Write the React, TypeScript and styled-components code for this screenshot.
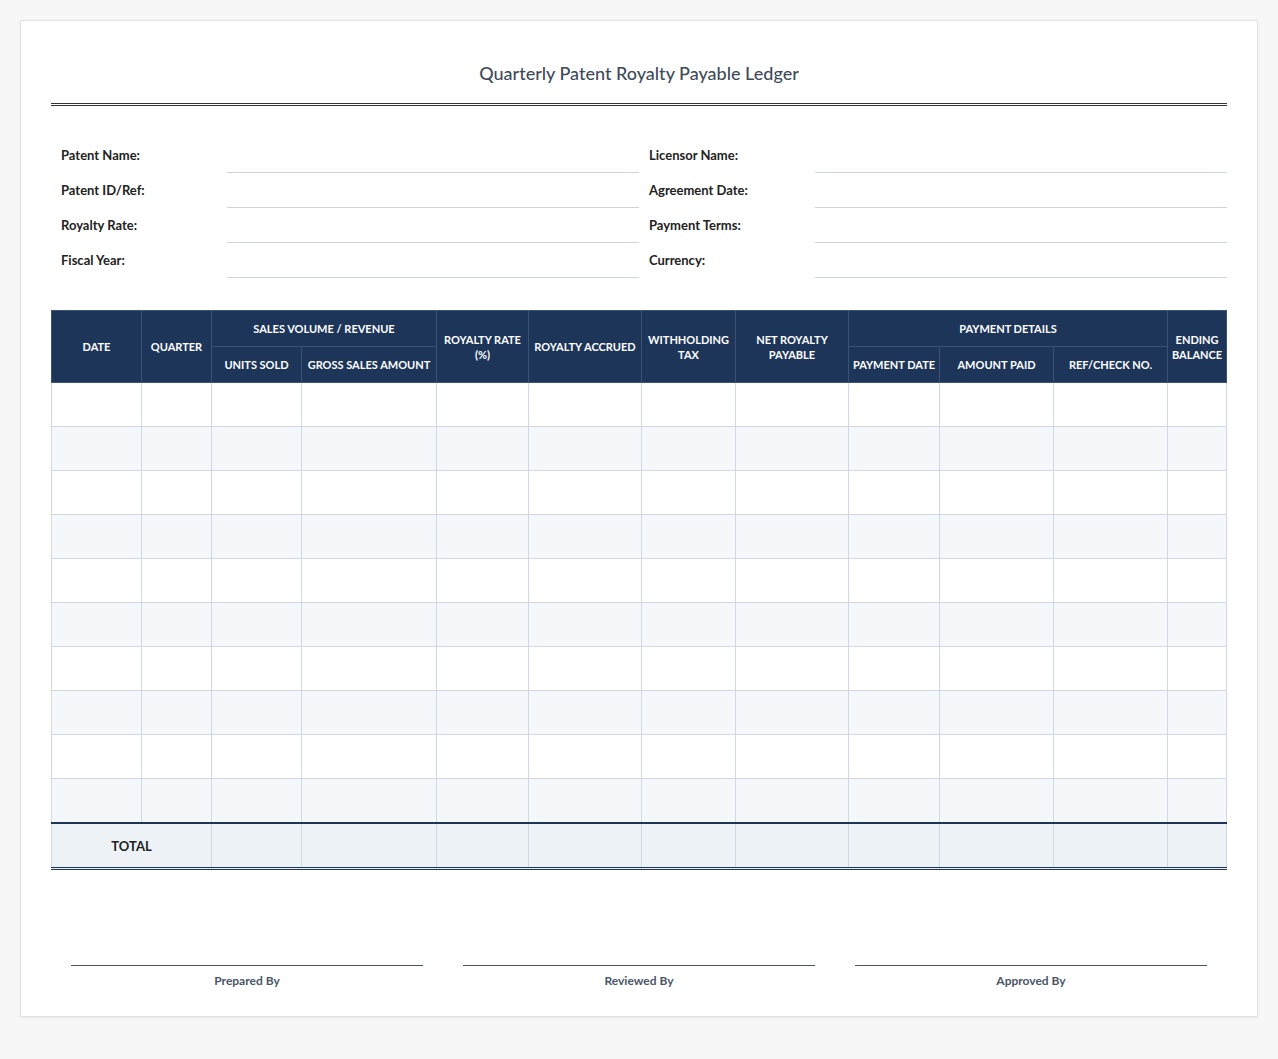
import * as React from "react";
import styled, { createGlobalStyle } from "styled-components";

const GlobalStyle = createGlobalStyle`
  body {
    margin: 0;
    background: #f7f7f7;
    font-family: Lato, "Open Sans", sans-serif;
  }
`;

const leftFields: string[] = ["Patent Name:", "Patent ID/Ref:", "Royalty Rate:", "Fiscal Year:"];
const rightFields: string[] = ["Licensor Name:", "Agreement Date:", "Payment Terms:", "Currency:"];
const widths: number[] = [90, 70, 90, 135, 92, 113, 94, 113, 91, 114, 114, 59];
const rows = Array.from({ length: 10 }, (_, i) => i);

function App() {
  return (
    <>
      <GlobalStyle />
      <Page>
        <Card>
          <Title>Quarterly Patent Royalty Payable Ledger</Title>
          <Fields>
            {[leftFields, rightFields].map((list, k) => (
              <FieldHalf key={k}>
                {list.map((f) => (
                  <React.Fragment key={f}>
                    <Label>{f}</Label>
                    <Blank />
                  </React.Fragment>
                ))}
              </FieldHalf>
            ))}
          </Fields>
          <Table>
            <colgroup>
              {widths.map((w, i) => (
                <col key={i} style={{ width: w }} />
              ))}
            </colgroup>
            <thead>
              <tr>
                <Th rowSpan={2}>Date</Th>
                <Th rowSpan={2}>Quarter</Th>
                <Th colSpan={2}>Sales Volume / Revenue</Th>
                <Th rowSpan={2}>Royalty Rate<br />(%)</Th>
                <Th rowSpan={2}>Royalty Accrued</Th>
                <Th rowSpan={2}>Withholding<br />Tax</Th>
                <Th rowSpan={2}>Net Royalty<br />Payable</Th>
                <Th colSpan={3}>Payment Details</Th>
                <Th rowSpan={2}>Ending<br />Balance</Th>
              </tr>
              <tr>
                <Th $nowrap>Units Sold</Th>
                <Th $nowrap>Gross Sales Amount</Th>
                <Th $nowrap>Payment Date</Th>
                <Th $nowrap>Amount Paid</Th>
                <Th $nowrap>Ref/Check No.</Th>
              </tr>
            </thead>
            <tbody>
              {rows.map((r) => (
                <BodyRow key={r} $alt={r % 2 === 1}>
                  {widths.map((_, i) => (
                    <Td key={i} />
                  ))}
                </BodyRow>
              ))}
              <TotalRow>
                <TotalLabel colSpan={2}>TOTAL</TotalLabel>
                {widths.slice(2).map((_, i) => (
                  <Td key={i} />
                ))}
              </TotalRow>
            </tbody>
          </Table>
          <Signatures>
            {["Prepared By", "Reviewed By", "Approved By"].map((s) => (
              <Sign key={s}>{s}</Sign>
            ))}
          </Signatures>
        </Card>
      </Page>
    </>
  );
}
export default App;

const Page = styled.div`
  padding: 20px;
`;

const Card = styled.div`
  background: #fff;
  border: 1px solid #e2e2e2;
  box-shadow: 0 1px 3px rgba(0, 0, 0, 0.06);
  padding: 30px 30px 28px;
`;

const Title = styled.h1`
  margin: 0;
  text-align: center;
  font-size: 18px;
  font-weight: 500;
  color: #3f4a5a;
  padding: 11px 0 19px;
  border-bottom: 3px double #333;
`;

const Fields = styled.div`
  display: flex;
  margin: 32px 0 32px;
`;

const FieldHalf = styled.div`
  flex: 1;
  display: grid;
  grid-template-columns: 176px 1fr;
`;

const Label = styled.div`
  height: 35px;
  padding: 9px 0 0 10px;
  box-sizing: border-box;
  font-size: 13px;
  font-weight: 700;
  color: #222;
`;

const Blank = styled.div`
  height: 35px;
  box-sizing: border-box;
  border-bottom: 1px solid #cbd5e1;
`;

const Table = styled.table`
  width: 100%;
  border-collapse: collapse;
  table-layout: fixed;
  border-bottom: 3px double #1e3558;
`;

const Th = styled.th<{ $nowrap?: boolean }>`
  background: #1c3559;
  color: #fff;
  font-size: 11px;
  font-weight: 700;
  text-transform: uppercase;
  white-space: ${(p) => (p.$nowrap ? "nowrap" : "normal")};
  height: 35px;
  padding: 0 2px;
  line-height: 15px;
  border: 1px solid #3b5273;
  vertical-align: middle;
`;

const BodyRow = styled.tr<{ $alt: boolean }>`
  background: ${(p) => (p.$alt ? "#f5f8fb" : "#fff")};
`;

const Td = styled.td`
  height: 43px;
  padding: 0;
  border: 1px solid #cfd8e3;
`;

const TotalRow = styled.tr`
  background: #edf2f7;
  border-top: 2px solid #1e3558;
`;

const TotalLabel = styled.td`
  height: 43px;
  padding: 0;
  border: 1px solid #cfd8e3;
  border-top: 2px solid #1e3558;
  text-align: center;
  font-size: 13px;
  font-weight: 700;
  color: #222;
`;

const Signatures = styled.div`
  display: flex;
  gap: 40px;
  padding: 0 20px;
  margin-top: 95px;
`;

const Sign = styled.div`
  flex: 1;
  border-top: 1px solid #4a5568;
  padding-top: 7px;
  text-align: center;
  font-size: 12px;
  font-weight: 700;
  color: #4a5568;
`;
